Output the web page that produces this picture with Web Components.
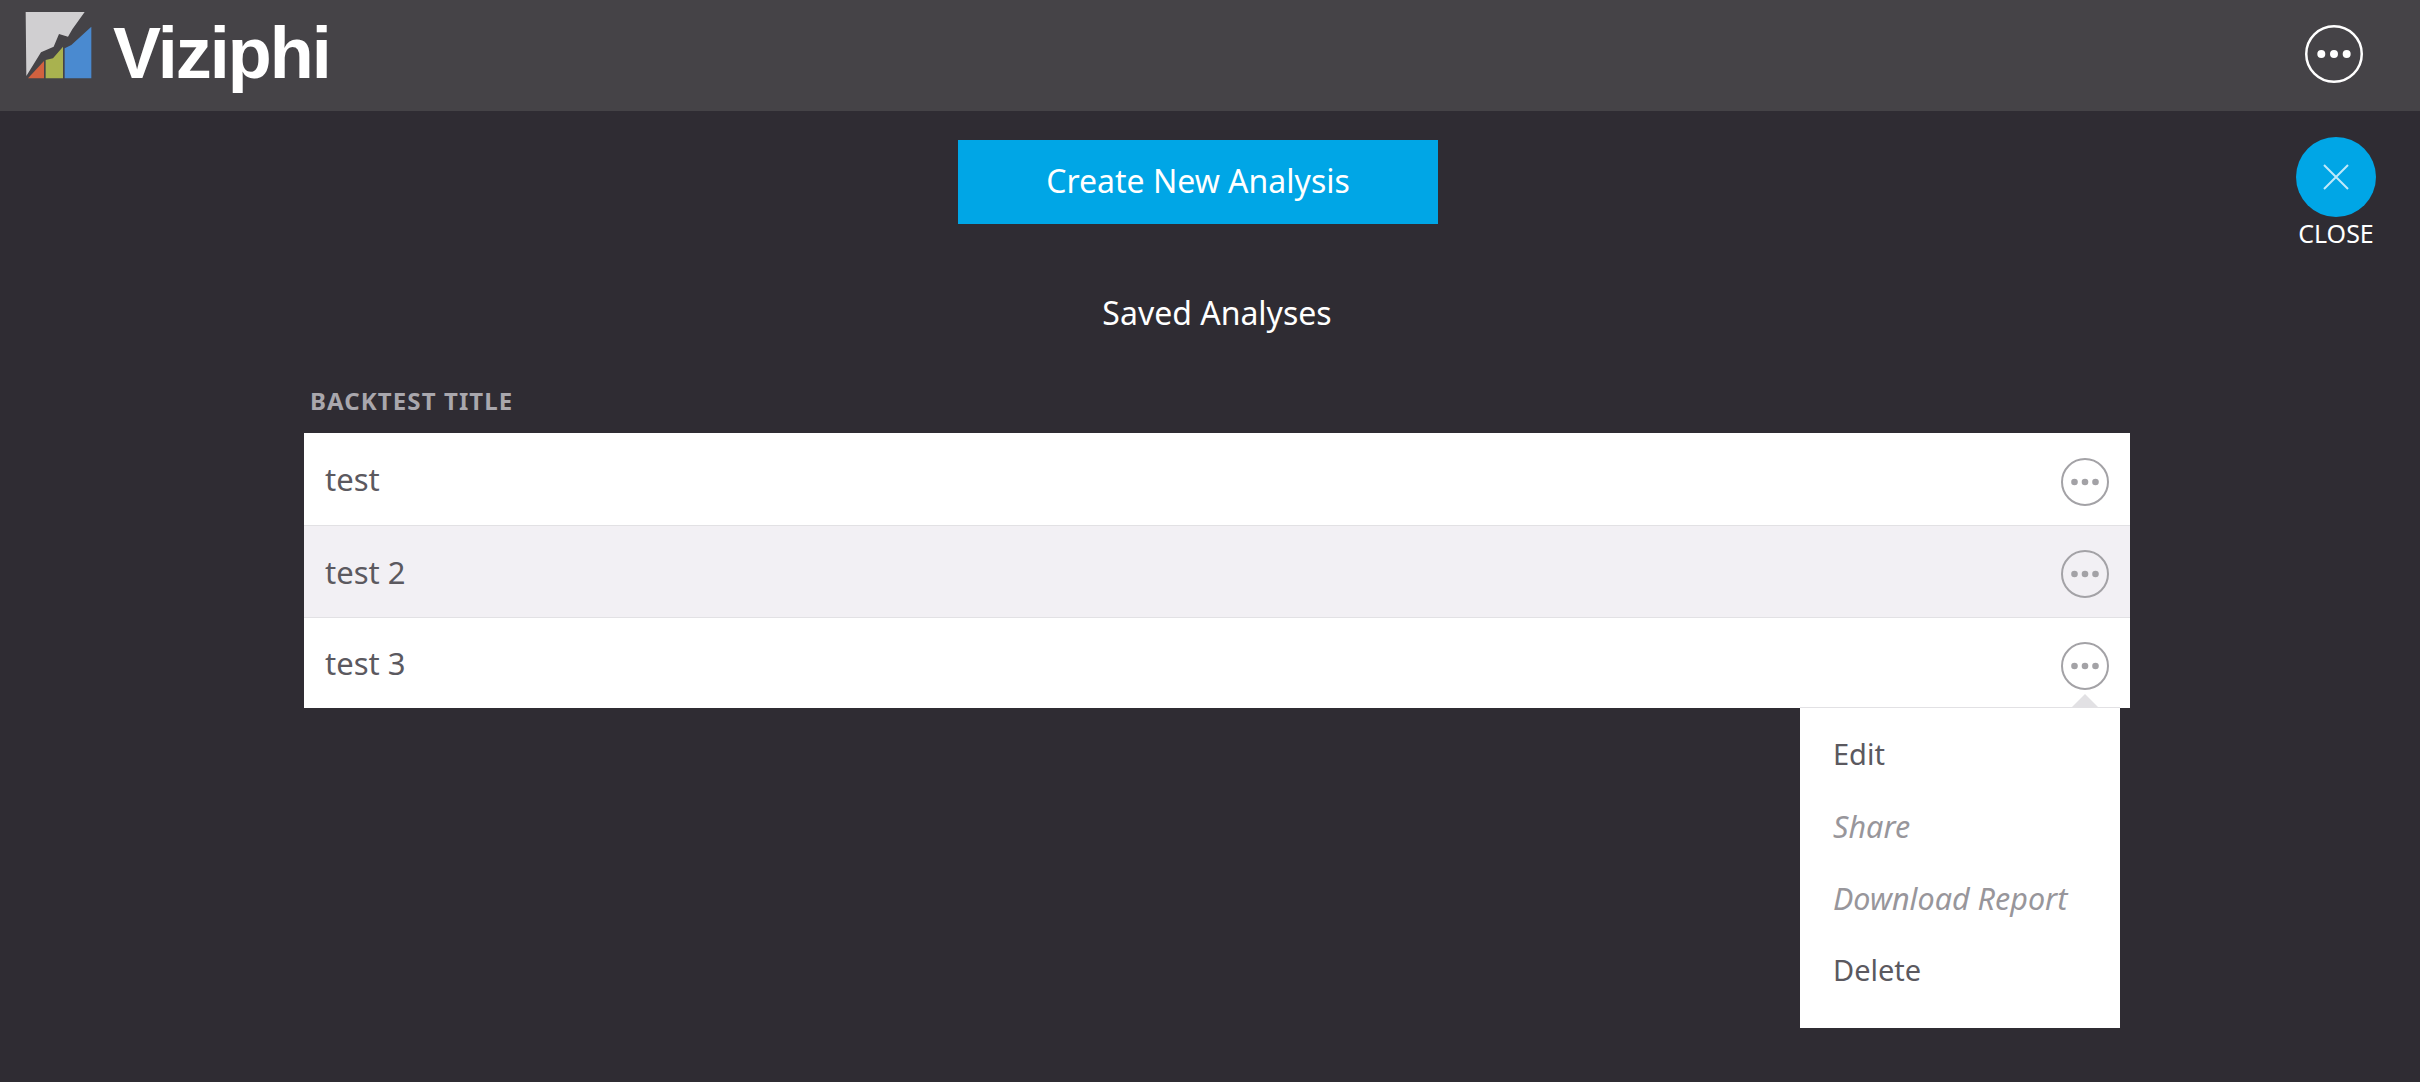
<!DOCTYPE html>
<html>
<head>
<meta charset="utf-8">
<title>Viziphi</title>
<style>
  html, body { margin: 0; height: 100%; background: #2f2c33; }
  body { font-family: "Noto Sans", "Open Sans", sans-serif; overflow: hidden; }
</style>
</head>
<body>
<app-header>Viziphi</app-header>
<saved-page>
  <close-button slot="close">CLOSE</close-button>
  <create-button slot="create">Create New Analysis</create-button>
  <span slot="title">Saved Analyses</span>
  <backtest-table slot="table" heading="BACKTEST TITLE">
    <backtest-row>test</backtest-row>
    <backtest-row shaded>test 2</backtest-row>
    <backtest-row>test 3
      <popup-menu slot="menu">
        <menu-item>Edit</menu-item>
        <menu-item disabled>Share</menu-item>
        <menu-item disabled>Download Report</menu-item>
        <menu-item>Delete</menu-item>
      </popup-menu>
    </backtest-row>
  </backtest-table>
</saved-page>

<script>
// 圆圈里三个点的图标，颜色和尺寸从属性里取
class MoreIcon extends HTMLElement{
  constructor(){
    super();
    this.attachShadow({mode: 'open'})
    let size = this.getAttribute('size') || 48
    let color = this.getAttribute('color') || '#a3a2a6'
    let dot = this.getAttribute('dot') || color
    let width = this.getAttribute('stroke') || 2
    this.shadowRoot.innerHTML = `
      <style>
        :host{ display: block; line-height: 0; }
      </style>
      <svg width="${size}" height="${size}" viewBox="0 0 48 48">
        <circle cx="24" cy="24" r="${24 - width / 2 * 48 / size}" fill="none" stroke="${color}" stroke-width="${width * 48 / size}"/>
        <circle cx="13.5" cy="24" r="3.3" fill="${dot}"/>
        <circle cx="24" cy="24" r="3.3" fill="${dot}"/>
        <circle cx="34.5" cy="24" r="3.3" fill="${dot}"/>
      </svg>`
  }
}
customElements.define('more-icon', MoreIcon)

class AppHeader extends HTMLElement{
  constructor(){
    super();
    this.attachShadow({mode: 'open'})
    this.shadowRoot.innerHTML = `
      <style>
        :host{
          display: flex;
          align-items: center;
          height: 111px;
          padding: 0 57px 0 23px;
          background: #454347;
          color: #fff;
        }
        svg{ display: block; margin-right: 18px; margin-bottom: 19px; }
        .name{
          flex: 1;
          font: bold 72px/1 "Liberation Sans", sans-serif;
          letter-spacing: -2px;
          margin-bottom: 6px;
        }
        more-icon{ margin-bottom: 4px; }
      </style>
      <svg width="72" height="72" viewBox="70 30 216 216">
        <polygon points="78,36 255,36 218,88 205,110 178,102 162,140 124,157 80,228" fill="#d0cfd1"/>
        <polygon points="85,235 133,183 133,235" fill="#d2613f"/>
        <polygon points="138,235 138,180 160,175 190,140 190,235" fill="#a9b24f"/>
        <polygon points="195,235 195,145 215,135 275,80 275,235" fill="#4a8ad0"/>
      </svg>
      <div class="name"><slot></slot></div>
      <more-icon size="58" color="#fff" stroke="2.5"></more-icon>`
  }
}
customElements.define('app-header', AppHeader)

// 页面主体：按钮、标题、表格依次排下来，关闭按钮浮在右上角
class SavedPage extends HTMLElement{
  constructor(){
    super();
    this.attachShadow({mode: 'open'})
    this.shadowRoot.innerHTML = `
      <style>
        :host{
          display: block;
          position: relative;
          padding: 29px 290px 0 304px;
          color: #fff;
        }
        .close{ position: absolute; top: 26px; right: 44px; }
        .create{ display: flex; margin-left: 654px; }
        .title{
          text-align: center;
          font-size: 32px;
          line-height: 42px;
          margin-top: 68px;
        }
        .table{ margin-top: 52px; }
      </style>
      <div class="close"><slot name="close"></slot></div>
      <div class="create"><slot name="create"></slot></div>
      <div class="title"><slot name="title"></slot></div>
      <div class="table"><slot name="table"></slot></div>`
  }
}
customElements.define('saved-page', SavedPage)

class CreateButton extends HTMLElement{
  constructor(){
    super();
    this.attachShadow({mode: 'open'})
    this.shadowRoot.innerHTML = `
      <style>
        :host{
          display: flex;
          align-items: center;
          justify-content: center;
          box-sizing: border-box;
          width: 480px;
          height: 84px;
          padding-bottom: 4px;
          background: #00a6e6;
          color: #fff;
          font-size: 32px;
        }
      </style>
      <slot></slot>`
  }
}
customElements.define('create-button', CreateButton)

class CloseButton extends HTMLElement{
  constructor(){
    super();
    this.attachShadow({mode: 'open'})
    this.shadowRoot.innerHTML = `
      <style>
        :host{
          display: flex;
          flex-direction: column;
          align-items: center;
          width: 80px;
          color: #fff;
          font-size: 25px;
          line-height: 32px;
        }
        .round{
          width: 80px;
          height: 80px;
          border-radius: 50%;
          background: #00a6e6;
          display: flex;
          align-items: center;
          justify-content: center;
        }
        .label{ white-space: nowrap; }
      </style>
      <div class="round">
        <svg width="26" height="26" viewBox="0 0 26 26">
          <path d="M1 1 L25 25 M25 1 L1 25" stroke="#bfe9fa" stroke-width="2" fill="none"/>
        </svg>
      </div>
      <div class="label"><slot></slot></div>`
  }
}
customElements.define('close-button', CloseButton)

class BacktestTable extends HTMLElement{
  constructor(){
    super();
    this.attachShadow({mode: 'open'})
    this.shadowRoot.innerHTML = `
      <style>
        :host{ display: block; width: 1826px; }
        .heading{
          padding-left: 6px;
          font-weight: bold;
          font-size: 24px;
          letter-spacing: 1.1px;
          line-height: 30px;
          color: #a9a7ad;
          margin-bottom: 17px;
        }
        .rows{ background: #fff; }
      </style>
      <div class="heading">${this.getAttribute('heading')}</div>
      <div class="rows"><slot></slot></div>`
  }
}
customElements.define('backtest-table', BacktestTable)

class BacktestRow extends HTMLElement{
  constructor(){
    super();
    this.attachShadow({mode: 'open'})
    this.shadowRoot.innerHTML = `
      <style>
        :host{
          display: flex;
          align-items: center;
          position: relative;
          height: 91px;
          padding: 0 21px 0 21px;
          border-top: 1px solid #e2e1e4;
          background: #fff;
          color: #5b595f;
          font-size: 31px;
        }
        :host(:first-child){ border-top: 0; height: 92px; }
        :host(:last-child){ height: 90px; }
        :host([shaded]){ background: #f2f0f4; }
        .text{ flex: 1; }
        more-icon{ margin-top: 5px; }
        .pop{ position: absolute; top: 100%; right: 10px; z-index: 2; }
      </style>
      <div class="text"><slot></slot></div>
      <more-icon></more-icon>
      <div class="pop"><slot name="menu"></slot></div>`
  }
}
customElements.define('backtest-row', BacktestRow)

class PopupMenu extends HTMLElement{
  constructor(){
    super();
    this.attachShadow({mode: 'open'})
    this.shadowRoot.innerHTML = `
      <style>
        :host{
          display: block;
          position: relative;
          width: 320px;
          padding: 10px 0 22px;
          background: #fff;
          box-shadow: 0 -1px 0 #e2e1e4;
        }
        .arrow{
          position: absolute;
          top: -14px;
          right: 21px;
          width: 0;
          height: 0;
          border: 14px solid transparent;
          border-top: 0;
          border-bottom-color: #e2e1e4;
        }
      </style>
      <div class="arrow"></div>
      <slot></slot>`
  }
}
customElements.define('popup-menu', PopupMenu)

class MenuItem extends HTMLElement{
  constructor(){
    super();
    this.attachShadow({mode: 'open'})
    this.shadowRoot.innerHTML = `
      <style>
        :host{
          display: block;
          height: 72px;
          line-height: 72px;
          padding-left: 33px;
          font-size: 29px;
          color: #5b595f;
        }
        :host([disabled]){ font-style: italic; font-size: 30.5px; color: #98969b; }
      </style>
      <slot></slot>`
  }
}
customElements.define('menu-item', MenuItem)
</script>
</body>
</html>
